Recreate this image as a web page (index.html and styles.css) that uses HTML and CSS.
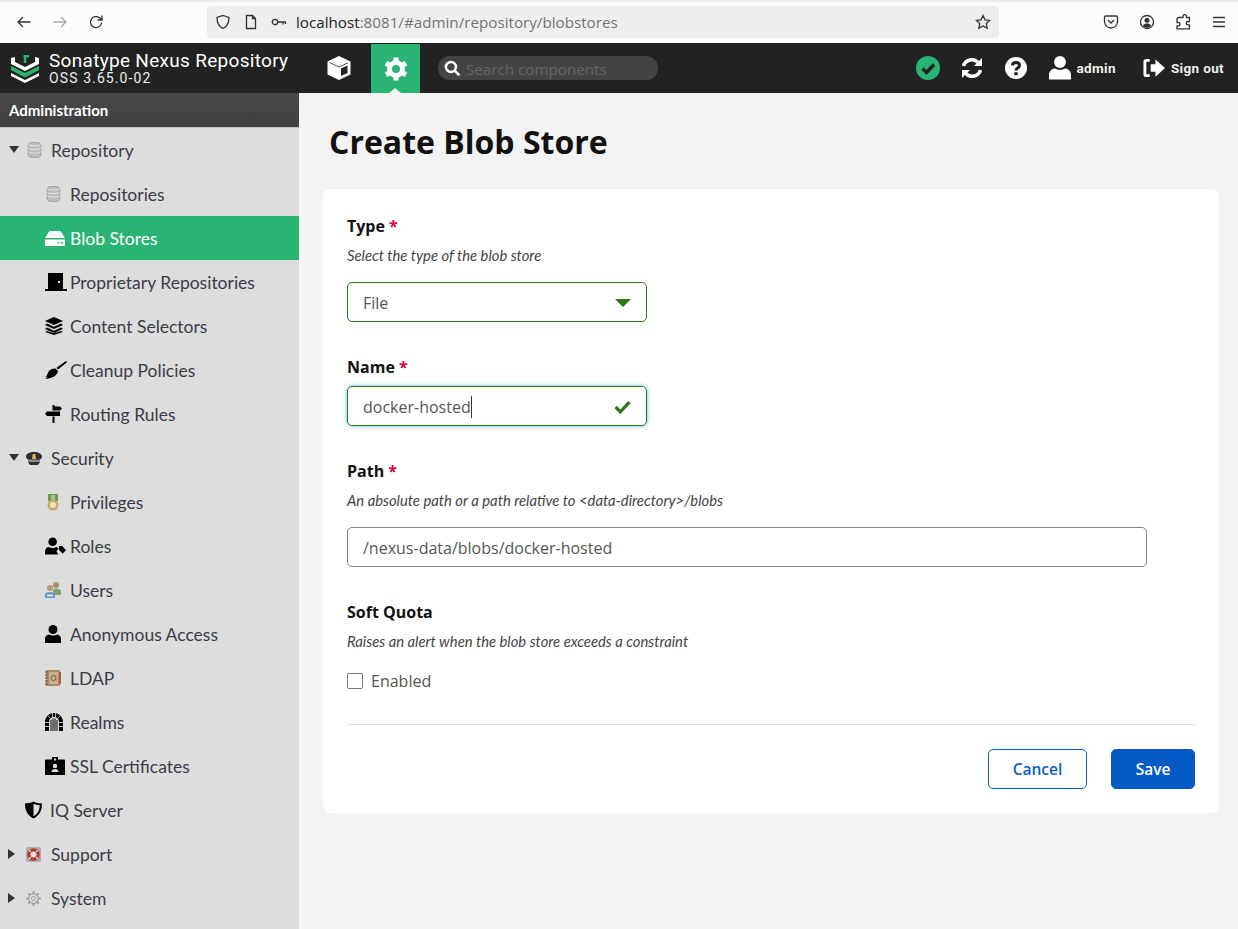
FILE: index.html
```html
<!DOCTYPE html>
<html lang="en">
<head>
<meta charset="utf-8">
<title>Create Blob Store</title>
<link rel="stylesheet" href="styles.css">
</head>
<body>
<div class="chrome">
  <div class="chrome-nav">
    <svg class="ci" viewBox="0 0 16 16"><path d="M14.500 8H2M7 3 2 8l5 5"/></svg>
    <svg class="ci dim" viewBox="0 0 16 16"><path d="M1.500 8H14M9 3l5 5-5 5"/></svg>
    <svg class="ci" viewBox="0 0 16 16"><path d="M13.500 8.500A5.500 5.500 0 1 1 11.500 3.800L14 6M14 1.500V6H9.500"/></svg>
  </div>
  <div class="urlbar">
    <svg class="ci" viewBox="0 0 16 16"><path d="M8 1.500 14 3.500c0 5-1.500 9-6 11-4.500-2-6-6-6-11z"/></svg>
    <svg class="ci" viewBox="0 0 16 16"><path d="M3.500 1.500h6l3 3v10h-9zM9.500 1.500v3h3"/></svg>
    <svg class="ci key" viewBox="0 0 16 16"><circle cx="4" cy="8" r="2.700"/><path d="M6.700 8H15M12 8v2.500M14.500 8v2"/></svg>
    <span class="url"><b>localhost</b>:8081/#admin/repository/blobstores</span>
    <svg class="ci star" viewBox="0 0 16 16"><path d="m8 1.500 2 4.300 4.700.6-3.400 3.200.9 4.700L8 12l-4.200 2.300.9-4.700L1.300 6.400 6 5.800z"/></svg>
  </div>
  <div class="chrome-tools">
    <svg class="ci" viewBox="0 0 16 16"><path d="M2.500 2h11c.7 0 1 .4 1 1v4.500a6.500 6.500 0 0 1-13 0V3c0-.6.3-1 1-1zM5 6l3 3 3-3"/></svg>
    <svg class="ci" viewBox="0 0 16 16"><circle cx="8" cy="8" r="6.500"/><circle class="fill" cx="8" cy="6.300" r="2.500"/><path class="fill" d="M3.800 12c1-2 2.500-2.500 4.200-2.500s3.200.5 4.200 2.500A6 6 0 0 1 3.800 12z"/></svg>
    <svg class="ci" viewBox="0 0 16 16"><path d="M6 3.500h2V2.300a1.700 1.700 0 0 1 3.400 0v1.200h3v4h-1.500a1.700 1.700 0 0 0 0 3.400h1.500v4H2v-3h1.300a1.700 1.700 0 0 0 0-3.400H2V5.500c0-1.200.8-2 2-2z"/></svg>
    <svg class="ci" viewBox="0 0 16 16"><path d="M2 3.500h12M2 8h12M2 12.500h12"/></svg>
  </div>
</div>

<header class="topbar">
  <div class="brand">
    <svg class="logo" viewBox="0 0 28 28">
      <path class="lg-w" d="M0 3l4-1v5l10 5 10-5V2l4 1v6l-14 7L0 9z"/>
      <path class="lg-g" d="M0 11l14 7 14-7v4l-14 7.500L0 15z"/>
      <path class="lg-w" d="M0 18l14 7 14-7v3l-14 7L0 21z"/>
      <path class="lg-gs" d="M12.500 1.200H18M14 0v8"/>
    </svg>
    <div class="brand-text">
      <div class="brand-name">Sonatype Nexus Repository</div>
      <div class="brand-ver">OSS 3.65.0-02</div>
    </div>
  </div>
  <div class="mode">
    <svg class="mode-icon cube" viewBox="0 0 26 26"><path d="M13 1 24.500 6.500v13L13 25 1.500 19.500v-13z" class="w"/><path class="d" d="M15 13.500l6.500-3v7.500L15 21z"/><path class="ln" d="M3.500 7.500 13 12l9-4.200"/></svg>
  </div>
  <div class="mode active">
    <svg class="mode-icon gear-top" viewBox="0 0 24 24"><circle class="ring" cx="12" cy="12" r="6.500"/><path class="teeth" d="M12 .500V5M12 19v4.500M2 6.250l3.900 2.250M18.100 15.500 22 17.750M2 17.750l3.900-2.250M18.100 8.500 22 6.250"/></svg>
    <span class="notch"></span>
  </div>
  <div class="search">
    <svg class="search-icon" viewBox="0 0 16 16"><circle cx="6.500" cy="6.500" r="4.700"/><path d="m10 10 4.500 4.500"/></svg>
    <span class="search-ph">Search components</span>
  </div>
  <div class="top-right">
    <svg class="status" viewBox="0 0 24 24"><circle cx="12" cy="12" r="12"/><path d="m6.500 12.500 4 4 7.500-8"/></svg>
    <svg class="tool refresh" viewBox="0 0 24 24"><path d="M3.500 10A8.500 8.500 0 0 1 18 6.500M20.500 14A8.500 8.500 0 0 1 6 17.500"/><path class="w" d="M22 2v8h-8zM2 22v-8h8z"/></svg>
    <svg class="tool q" viewBox="0 0 24 24"><circle class="w" cx="12" cy="12" r="11"/><path d="M8.500 9.500C8.500 7.500 10 6.500 12 6.500s3.500 1.200 3.500 3c0 2.500-3.500 2.500-3.500 5"/><rect class="dk" x="10.300" y="16.200" width="3.400" height="3"/></svg>
    <div class="user">
      <svg class="user-icon" viewBox="0 0 24 26"><circle cx="12" cy="7" r="6.500"/><path d="M0 26v-5c0-4.500 3.500-7 6.500-7 1.500 1 3.500 1.500 5.500 1.500s4-.5 5.500-1.500c3 0 6.500 2.500 6.500 7v5z"/></svg>
      <span class="top-label">admin</span>
    </div>
    <div class="signout">
      <svg class="signout-icon" viewBox="0 0 24 20"><path class="w" d="M13 1v5H8v8h5v5l10-9z"/><path class="st" d="M7 2H3.500C2.500 2 2 2.600 2 3.500v13c0 .9.500 1.500 1.500 1.500H7"/></svg>
      <span class="top-label">Sign out</span>
    </div>
  </div>
</header>

<div class="body">
  <aside class="sidebar">
    <div class="side-title">Administration</div>
    <nav class="tree">
      <div class="row l1"><span class="tw down"></span><span class="slot"><svg class="i-db" viewBox="0 0 16 18"><path class="db" d="M1 3c0-3.500 14-3.500 14 0v12c0 3.500-14 3.500-14 0z"/><path class="dbl" d="M1 7c2 2 12 2 14 0M1 11c2 2 12 2 14 0M1 3c2 2 12 2 14 0"/></svg></span><span>Repository</span></div>
      <div class="row l2"><span class="slot"><svg class="i-db" viewBox="0 0 16 18"><path class="db" d="M1 3c0-3.500 14-3.500 14 0v12c0 3.500-14 3.500-14 0z"/><path class="dbl" d="M1 7c2 2 12 2 14 0M1 11c2 2 12 2 14 0M1 3c2 2 12 2 14 0"/></svg></span><span>Repositories</span></div>
      <div class="row l2 selected"><span class="slot"><svg class="i-blob" viewBox="0 0 20 15"><path class="wh" d="M4.500 0h11l4.500 7H0zM0 8.500h20V14c0 .7-.4 1-1 1H1c-.6 0-1-.3-1-1z"/><path class="gr" d="M12.500 11h2v1.500h-2zM16 11h2v1.500h-2z"/></svg></span><span>Blob Stores</span></div>
      <div class="row l2"><span class="slot"><svg class="i-door" viewBox="0 0 22 18"><path d="M3 0h15v16H3zM0 16h22v2H0z"/><rect class="hole" x="13" y="8" width="2" height="2"/></svg></span><span>Proprietary Repositories</span></div>
      <div class="row l2"><span class="slot"><svg class="i-stack" viewBox="0 0 18 18"><path d="M9 0l9 4-9 4-9-4zM2 6.500l7 3.200 7-3.200 2 1.500-9 4-9-4zM2 10.500l7 3.200 7-3.200 2 1.500-9 4-9-4zM2 14l7 2.200 7-2.200 2 1-9 3-9-3z"/></svg></span><span>Content Selectors</span></div>
      <div class="row l2"><span class="slot"><svg class="i-door" viewBox="0 0 22 18"><path d="M21 0l1 1.200-9 7.300-1.500-1.700zM10.500 7.500 13 10c-.5 3-3 5.500-6 6.500-2 .7-5 1.500-7 1.500 1-.5 2-1.500 2.500-2.500L0 16c1.500-1 2.500-2.500 3-4.500 1-2.500 4.500-4.500 7.500-4z"/></svg></span><span>Cleanup Policies</span></div>
      <div class="row l2"><span class="slot"><svg class="i-route" viewBox="0 0 17 18"><path d="M7.500 0h2v1.500H15l2 2-2 2H7.500zM2 6.500h13v4.500H2L0 8.700zM7.500 11.500h2V18h-2z"/></svg></span><span>Routing Rules</span></div>

      <div class="row l1"><span class="tw down"></span><span class="slot"><svg class="i-hat" viewBox="0 0 16 13"><path class="hat" d="M8 0c4.500 0 8 2 8 4.500 0 1.500-1 2.500-2 3V9H2V7.500c-1-.5-2-1.500-2-3C0 2 3.500 0 8 0z"/><path class="badge" d="M6.700 2h2.600l.7 5H6z"/><path class="band" d="M2 7.500h12V10H2z"/><path class="hat" d="M2 10h12l-2 3H4z"/></svg></span><span>Security</span></div>
      <div class="row l2"><span class="slot"><svg class="i-medal" viewBox="0 0 12 17"><path class="ribbon" d="M1 0h10v7H1z"/><path class="ribbon2" d="M4 1h4v5H4z"/><circle class="medal" cx="6" cy="11" r="5.500"/><circle class="medal-in" cx="6" cy="11" r="3"/></svg></span><span>Privileges</span></div>
      <div class="row l2"><span class="slot"><svg class="i-role" viewBox="0 0 22 18"><circle cx="8" cy="4.500" r="4.500"/><path d="M0 18v-3c0-3 2-5 4-5 1.300.8 2.600 1 4 1s2.700-.2 4-1l2 1.500-2 3 2 3.500zM14.500 9H18l4 4.500-3.500 3.500-4-4z"/></svg></span><span>Roles</span></div>
      <div class="row l2"><span class="slot"><svg class="i-users" viewBox="0 0 16 16"><circle class="u-h" cx="11" cy="3" r="3"/><path class="u-g" d="M8 13V9c0-1.500 1-2.500 3-2.500s5 1 5 2.500v4z"/><circle class="u-h2" cx="5" cy="6" r="3"/><path class="u-bl" d="M0 16v-3.500c0-1.500 2-2.500 5-2.500s5 1 5 2.500V16z"/><path class="u-w" d="M2 13.500h6"/></svg></span><span>Users</span></div>
      <div class="row l2"><span class="slot"><svg class="i-anon" viewBox="0 0 16 18"><circle cx="8" cy="4.500" r="4.500"/><path d="M0 18v-4c0-3 2-4.500 4-4.500 1.200.8 2.500 1 4 1s2.800-.2 4-1c2 0 4 1.500 4 4.500v4z"/></svg></span><span>Anonymous Access</span></div>
      <div class="row l2"><span class="slot"><svg class="i-ldap" viewBox="0 0 16 16"><rect class="book" x="1" y="0" width="14" height="16" rx="1"/><rect class="book-e" x="14" y="2" width="2" height="12"/><rect class="book-in" x="4" y="2" width="9" height="12"/><path class="book-r" d="M0 2h2.500M0 5h2.500M0 8h2.500M0 11h2.500M0 14h2.500"/><circle class="book-at" cx="8.500" cy="8" r="2.500"/></svg></span><span>LDAP</span></div>
      <div class="row l2"><span class="slot"><svg class="i-realm" viewBox="0 0 18 18"><path fill-rule="evenodd" d="M9 0c5 0 9 4 9 9v9h-4V9c0-3-2-5-5-5S4 6 4 9v9H0V9c0-5 4-9 9-9z"/><path class="st-gap" d="M0 9.500h4M14 9.500h4M0 13.500h4M14 13.500h4M3 3l2.500 2.500M15 3l-2.500 2.500M7.500 0v4M10.500 0v4"/><path class="st-dk" d="M6 7v11M8 5.500V18M10 5.500V18M12 7v11"/></svg></span><span>Realms</span></div>
      <div class="row l2"><span class="slot"><svg class="i-ssl" viewBox="0 0 20 18"><path fill-rule="evenodd" d="M1 2.500h6V0h6v2.500h6c.6 0 1 .4 1 1V17c0 .6-.4 1-1 1H1c-.6 0-1-.4-1-1V3.500c0-.6.4-1 1-1z"/><circle class="id" cx="10" cy="9" r="2.200"/><path class="id" d="M6.500 15c0-2 1.500-3 3.500-3s3.500 1 3.500 3z"/><path class="id" d="M9 1.500h2v2H9z"/></svg></span><span>SSL Certificates</span></div>

      <div class="row l1b"><span class="slot"><svg class="i-iq" viewBox="0 0 18 18"><path d="M9 0c3 1.500 6 2 9 2 0 7-2 12-9 16C2 14 0 9 0 2c3 0 6-.5 9-2z"/><path class="sh" d="M9 2.500c2 1 4 1.500 6.500 1.500 0 5-1.500 9-6.500 11.500z"/></svg></span><span>IQ Server</span></div>
      <div class="row l1"><span class="tw right"></span><span class="slot"><svg class="i-sq" viewBox="0 0 16 16"><rect class="lb-bg" width="16" height="16" rx="2"/><circle class="lb" cx="8" cy="8" r="5"/><path class="lb-w" d="M3.500 3.500l1.500 1.500M12.500 3.500 11 5M3.500 12.500 5 11M12.500 12.500 11 11"/></svg></span><span>Support</span></div>
      <div class="row l1"><span class="tw right"></span><span class="slot"><svg class="i-sq" viewBox="0 0 16 16"><circle class="gear" cx="8" cy="8" r="5.200"/><circle class="gear2" cx="8" cy="8" r="2.200"/><path class="gear3" d="M8 0v3M8 13v3M0 8h3M13 8h3M2.500 2.500l2 2M11.500 11.500l2 2M2.500 13.500l2-2M11.500 4.500l2-2"/></svg></span><span>System</span></div>
    </nav>
  </aside>

  <main class="content">
    <h1 class="page-title">Create Blob Store</h1>
    <section class="card">
      <div class="field f-type">
        <div class="label">Type <em>*</em></div>
        <div class="hint">Select the type of the blob store</div>
        <div class="box valid"><span>File</span><span class="caret"></span></div>
      </div>
      <div class="field f-name">
        <div class="label">Name <em>*</em></div>
        <div class="box valid focus"><span class="typed">docker-hosted</span><svg class="check" viewBox="0 0 16 13"><path d="m1.500 6.500 4.500 4.500 8.500-9"/></svg></div>
      </div>
      <div class="field f-path">
        <div class="label">Path <em>*</em></div>
        <div class="hint">An absolute path or a path relative to &lt;data-directory&gt;/blobs</div>
        <div class="box wide"><span>/nexus-data/blobs/docker-hosted</span></div>
      </div>
      <div class="field f-quota">
        <div class="label">Soft Quota</div>
        <div class="hint">Raises an alert when the blob store exceeds a constraint</div>
        <div class="check-row"><span class="cbox"></span><span>Enabled</span></div>
      </div>
      <div class="actions">
        <div class="btn cancel">Cancel</div>
        <div class="btn save">Save</div>
      </div>
    </section>
  </main>
</div>
</body>
</html>
```

FILE: styles.css
```css
* { box-sizing: border-box; }
html, body { margin: 0; height: 100%; }
body {
  width: 1238px;
  height: 929px;
  overflow: hidden;
  display: flex;
  flex-direction: column;
  font-family: "Lato", "Liberation Sans", sans-serif;
  background: #f3f3f3;
}

/* browser chrome */
.chrome {
  height: 43px;
  flex: none;
  background: #fcfcfc;
  border-top: 2px solid #ececec;
  display: flex;
  align-items: center;
  padding-bottom: 1px;
}
.chrome-nav { display: flex; gap: 20px; padding-left: 16px; width: 207px; align-items: center; }
.ci { width: 16px; height: 16px; fill: none; stroke: #333; stroke-width: 1.300; flex: none; }
.ci.dim { stroke: #aaa; }
.ci .fill { fill: #333; stroke: none; }
.urlbar {
  width: 792px;
  height: 32px;
  background: #eeeeee;
  border-radius: 4px;
  display: flex;
  align-items: center;
  padding: 0 8px;
  gap: 12px;
}
.url { font: 15.200px "Open Sans", sans-serif; color: #757575; margin-left: -3px; flex: 1; white-space: nowrap; }
.url b { font-weight: 400; color: #222; }
.chrome-tools { display: flex; gap: 20px; padding-left: 104px; align-items: center; }

/* top bar */
.topbar {
  height: 50px;
  flex: none;
  background: #222222;
  display: flex;
  align-items: stretch;
  color: #fff;
}
.brand { width: 314px; display: flex; align-items: center; padding-left: 11px; gap: 10px; flex: none; }
.logo { width: 28px; height: 28px; flex: none; margin-top: 2px; }
.lg-w { fill: #fff; }
.lg-g { fill: #29b473; }
.lg-gs { fill: none; stroke: #29b473; stroke-width: 2.500; }
.brand-text { font-family: "Roboto", sans-serif; padding-top: 1px; }
.brand-name { font-size: 19px; line-height: 20px; letter-spacing: .3px; font-weight: 400; white-space: nowrap; }
.brand-ver { font-size: 14px; line-height: 15px; letter-spacing: 1.100px; margin-top: 0; color: #eee; }
.mode { width: 49px; display: flex; align-items: center; justify-content: center; position: relative; flex: none; }
.mode.active { background: #29b473; margin-top: 1px; margin-left: 8px; margin-right: 18px; }
.mode-icon { width: 24px; height: 24px; }
.mode-icon.cube { width: 26px; height: 26px; }
.mode-icon .w { fill: #fff; }
.mode-icon .d { fill: #222; }
.mode-icon .ln { fill: none; stroke: #222; stroke-width: .8; }
.ring { fill: none; stroke: #fff; stroke-width: 5; }
.teeth { fill: none; stroke: #fff; stroke-width: 5; }
.notch {
  position: absolute;
  bottom: 0;
  left: 18px;
  border-left: 6px solid transparent;
  border-right: 6px solid transparent;
  border-bottom: 5px solid #f3f3f3;
}
.search {
  width: 220px;
  height: 24px;
  margin-top: 13px;
  background: #444444;
  border-radius: 12px;
  display: flex;
  align-items: center;
  padding-left: 6px;
  gap: 5px;
  flex: none;
}
.search-icon { width: 17px; height: 17px; fill: none; stroke: #fff; stroke-width: 2.400; }
.search-ph { font: 15.200px "Open Sans", sans-serif; color: #666; white-space: nowrap; margin-top: 2px; }
.top-right { flex: 1; display: flex; align-items: center; justify-content: flex-end; padding-right: 14px; padding-bottom: 1px; }
.status { width: 24px; height: 24px; margin-right: 20px; }
.status circle { fill: #29b473; }
.status path { fill: none; stroke: #222; stroke-width: 3.500; }
.tool { width: 24px; height: 24px; margin-right: 20px; fill: none; }
.tool.q { margin-right: 21px; }
.refresh { stroke: #fff; stroke-width: 3.500; }
.refresh .w { fill: #fff; stroke: none; }
.q .w { fill: #fff; }
.q path { fill: none; stroke: #222; stroke-width: 3; }
.q .dk { fill: #222; }
.user { display: flex; align-items: center; gap: 6px; margin-right: 27px; }
.user-icon { width: 22px; height: 25px; fill: #fff; }
.top-label { font: 700 13.500px "Roboto", sans-serif; letter-spacing: .35px; color: #eee; white-space: nowrap; }
.signout { display: flex; align-items: center; gap: 5px; }
.signout-icon { width: 23px; height: 20px; }
.signout-icon .w { fill: #fff; }
.signout-icon .st { fill: none; stroke: #fff; stroke-width: 3; }

/* layout */
.body { flex: 1; display: flex; min-height: 0; }
.sidebar { width: 299px; flex: none; background: #dddddd; }
.side-title {
  height: 35px;
  background: linear-gradient(#494949, #3f3f3f);
  border-bottom: 1px solid #c4c4c4;
  color: #fff;
  font: 700 15px/34px "Lato", sans-serif;
  padding-left: 9px;
}
.row {
  height: 44px;
  display: flex;
  align-items: center;
  font-size: 17.500px;
  color: #3c3c48;
  white-space: nowrap;
  position: relative;
}
.row.l1 { padding-left: 26px; }
.row.l1b { padding-left: 25px; }
.row.l2 { padding-left: 45px; }
.row.selected { background: #29b473; color: #fff; }
.slot { width: 25px; flex: none; display: flex; align-items: center; }
.i-db { width: 15px; height: 16px; margin-left: 1px; }
.i-blob { width: 20px; height: 15px; }
.i-door { width: 22px; height: 18px; }
.i-stack { width: 18px; height: 18px; }
.i-route { width: 17px; height: 18px; }
.i-hat { width: 16px; height: 13px; }
.i-medal { width: 12px; height: 17px; margin-left: 2px; }
.i-role { width: 21px; height: 18px; }
.i-users { width: 16px; height: 16px; }
.i-anon { width: 16px; height: 18px; }
.i-ldap { width: 16px; height: 16px; }
.i-realm { width: 18px; height: 18px; }
.i-ssl { width: 20px; height: 18px; }
.i-iq { width: 17px; height: 18px; }
.i-sq { width: 15px; height: 15px; }
.tw { position: absolute; left: 9px; top: 18px; width: 0; height: 0; }
.tw.down { border-left: 5px solid transparent; border-right: 5px solid transparent; border-top: 7px solid #333; }
.tw.right { left: 8px; top: 17px; border-top: 5px solid transparent; border-bottom: 5px solid transparent; border-left: 7px solid #333; }
.db { fill: #bdbdbd; stroke: #999; stroke-width: 1; }
.dbl { fill: none; stroke: #ececec; stroke-width: 1; }
.wh { fill: #fff; }
.gr { fill: #29b473; }
.hole { fill: #ddd; }
.hat { fill: #2f2f2f; }
.badge { fill: #d9b84f; }
.band { fill: #8a8a8a; }
.ribbon { fill: #6b9a52; }
.ribbon2 { fill: #a5c48f; }
.medal { fill: #c9aa66; }
.medal-in { fill: #efe6bd; }
.u-g { fill: #7da26a; }
.u-h { fill: #a98f6f; }
.u-h2 { fill: #b49a7a; }
.u-bl { fill: #6d9ac5; }
.u-w { stroke: #e8f0f8; stroke-width: 1.500; fill: none; }
.book { fill: #a98a63; }
.book-e { fill: #b5553c; }
.book-in { fill: #c8b08c; }
.book-r { stroke: #444; stroke-width: 1; fill: none; }
.book-at { fill: none; stroke: #7a5f3f; stroke-width: 1; }
.st-gap { stroke: #ddd; stroke-width: .8; fill: none; }
.st-dk { stroke: #000; stroke-width: 1; fill: none; }
.id { fill: #ddd; }
.sh { fill: #ddd; }
.lb-bg { fill: #b5aaaa; }
.lb { fill: #e6e0e0; stroke: #b13a38; stroke-width: 3.500; }
.lb-w { stroke: #eee; stroke-width: 1.500; fill: none; }
.gear { fill: none; stroke: #9a9a9a; stroke-width: 1.200; }
.gear2 { fill: none; stroke: #9a9a9a; stroke-width: 1; }
.gear3 { fill: none; stroke: #9a9a9a; stroke-width: 1.800; }

/* content */
.content { flex: 1; padding: 0 19px 0 24px; }
.page-title {
  margin: 27px 0 0 6px;
  font: 700 32px/44px "Open Sans", sans-serif;
  color: #111;
}
.card {
  margin-top: 25px;
  background: #fff;
  border-radius: 8px;
  height: 624px;
  padding: 24px;
  color: #44444f;
}
.field { font-family: "Open Sans", sans-serif; }
.label { font: 700 16px/26px "Open Sans", sans-serif; color: #111; }
.label em { font-style: normal; color: #d4003c; }
.hint { font: italic 14.800px/20px "Lato", sans-serif; color: #444; margin-top: 6px; }
.box {
  width: 300px;
  height: 40px;
  margin-top: 8px;
  border: 1px solid #808087;
  border-radius: 5px;
  display: flex;
  align-items: center;
  justify-content: space-between;
  padding: 2px 15px 0;
  font-size: 16px;
  color: #555;
}
.box.valid { border-color: #2a7a12; }
.box.focus { box-shadow: 0 0 4px #5fb4e0; margin-top: 6px; }
.box.wide { width: 800px; margin-top: 17px; }
.f-type .box { margin-top: 17px; }
.f-name { margin-top: 32px; }
.f-path { margin-top: 32px; }
.f-quota { margin-top: 32px; }
.typed { border-right: 1px solid #333; }
.caret {
  border-left: 8px solid transparent;
  border-right: 8px solid transparent;
  border-top: 8px solid #2a7a12;
}
.check { width: 17px; height: 14px; fill: none; stroke: #2a7a12; stroke-width: 3; }
.check-row { display: flex; align-items: center; gap: 8px; margin-top: 18px; font-size: 16px; line-height: 24px; color: #555; }
.cbox { width: 16px; height: 16px; border: 1px solid #777; border-radius: 2px; background: #fff; }
.actions {
  margin-top: 31px;
  border-top: 1px solid #ddddee;
  padding-top: 24px;
  display: flex;
  justify-content: flex-end;
  gap: 24px;
}
.btn {
  height: 40px;
  border-radius: 5px;
  font: 600 15.500px/38px "Open Sans", sans-serif;
  text-align: center;
}
.btn.cancel { width: 99px; border: 1px solid #0d5fc6; color: #0d5fc6; background: #fff; }
.btn.save { width: 84px; background: #055ac5; border: 1px solid #055ac5; color: #fff; }
```
